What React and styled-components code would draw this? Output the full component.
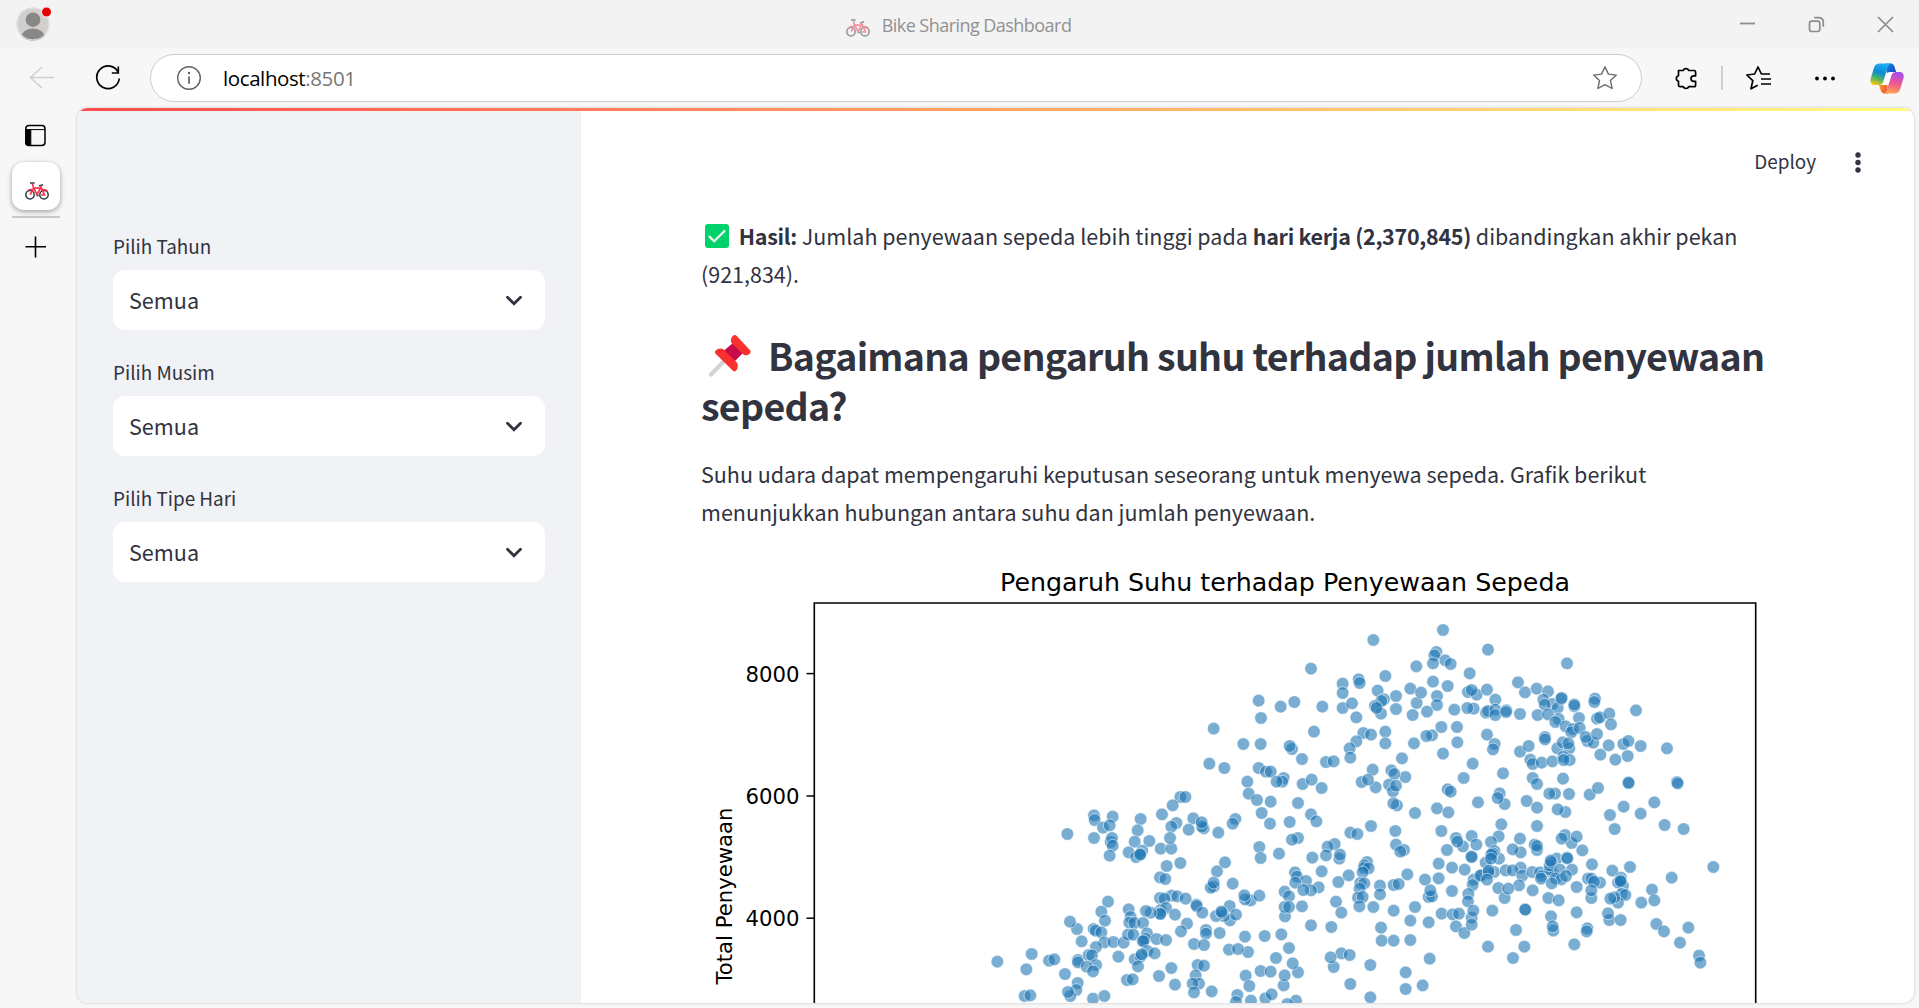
import React from 'react';
import styled, { createGlobalStyle, css } from 'styled-components';

const GlobalStyle = createGlobalStyle`
  * { box-sizing: border-box; }
  body { margin: 0; overflow: hidden; background: #f7f7f7; }
  svg { display: block; flex: none; }
`;

const uiFont = css`font-family: 'Open Sans', 'Noto Sans', sans-serif;`;
const appFont = css`font-family: 'Noto Sans CJK SC', 'Noto Sans', sans-serif;`;

const Window = styled.div`
  display: grid;
  grid-template-rows: 48px 60px 1fr;
  width: 1919px;
  height: 1008px;
  background: #f7f7f7;
`;

const TitleBar = styled.header`
  display: grid;
  grid-template-columns: 1fr auto 1fr;
  align-items: center;
  background: #f3f3f3;
`;
const Avatar = styled.div`padding-left: 15px;`;
const WindowTitle = styled.div`
  ${uiFont}
  display: flex;
  align-items: center;
  gap: 12px;
  padding: 2px 2px 0 0;
  font-size: 18px;
  line-height: 26px;
  letter-spacing: -0.54px;
  color: #919191;
  white-space: nowrap;
  svg { opacity: 0.5; margin-top: 5px; }
`;
const WindowButtons = styled.div`
  display: flex;
  justify-content: flex-end;
  gap: 52px;
  padding: 0 25px 0 0;
`;

const Toolbar = styled.nav`
  display: flex;
  align-items: center;
  padding: 0 15px 0 29px;
`;
const NavIcons = styled.div`
  display: flex;
  gap: 40px;
  width: 121px;
`;
const AddressBar = styled.div`
  ${uiFont}
  display: flex;
  align-items: center;
  width: 1492px;
  height: 48px;
  padding: 0 23px 0 25px;
  border: 1px solid #cdcdcd;
  border-radius: 24px;
  background: #fff;
`;
const Url = styled.div`
  flex: 1;
  padding-left: 21px;
  font-size: 20.5px;
  line-height: 28px;
  letter-spacing: -0.4px;
  color: #000;
  span { color: #767676; }
`;
const ToolIcons = styled.div`
  display: flex;
  flex: 1;
  align-items: center;
  padding-left: 32px;
`;
const Divider = styled.i`
  width: 1.5px;
  height: 24px;
  margin: 0 22px 0 23px;
  background: #cfcfcf;
`;
const MoreButton = styled.div`margin: 0 34.5px 0 42px;`;

const Body = styled.div`
  display: grid;
  grid-template-columns: 77px 1837px;
  min-height: 0;
`;
const TabRail = styled.aside`
  display: flex;
  flex-direction: column;
  align-items: center;
  width: 72px;
  padding-top: 16px;
`;
const ActiveTab = styled.div`
  display: grid;
  place-items: center;
  width: 48px;
  height: 48px;
  margin-top: 15px;
  padding: 10px 0 0 2px;
  border-radius: 12px;
  background: #fff;
  box-shadow: 0 1px 4px rgba(0, 0, 0, 0.28), 0 3px 6px rgba(0, 0, 0, 0.12);
`;
const RailRule = styled.i`
  width: 48px;
  height: 2px;
  margin: 6px 0 18px;
  background: #c9c9c9;
`;

const Page = styled.div`
  display: grid;
  grid-template-rows: 3px 1fr;
  height: 894.5px;
  overflow: hidden;
  border-radius: 11px;
  background: #fff;
  box-shadow: 0 0 3px rgba(0, 0, 0, 0.22);
`;
const Decoration = styled.div`background: linear-gradient(90deg, #ff4b4b, #fffd80);`;
const Columns = styled.div`
  display: grid;
  grid-template-columns: 504px 1333px;
  min-height: 0;
`;

const Sidebar = styled.aside`
  ${appFont}
  display: flex;
  flex-direction: column;
  gap: 25.5px;
  padding: 118.5px 36px 0;
  background: #f0f2f6;
  color: #31333f;
`;
const Field = styled.div`display: flex; flex-direction: column; gap: 9.5px;`;
const Label = styled.label`font-size: 18.9px; line-height: 31px;`;
const Select = styled.div`
  display: flex;
  align-items: center;
  justify-content: space-between;
  height: 60px;
  padding: 0 22px 2px 16px;
  border-radius: 12px;
  background: #fff;
  font-size: 21.6px;
  svg { margin-top: 3px; }
`;

const Main = styled.main`
  ${appFont}
  min-height: 0;
  overflow: hidden;
  padding: 0 50px 0 120px;
  color: #31333f;
  white-space: nowrap;
`;
const Header = styled.div`
  display: flex;
  justify-content: flex-end;
  height: 106.4px;
  padding: 35px 3px 0 0;
  font-size: 18.9px;
  line-height: 30px;
  gap: 39px;
  svg { margin-top: 6px; }
`;
const Paragraph = styled.p`
  margin: 0;
  font-size: 21.49px;
  line-height: 38px;
  b { font-weight: 700; letter-spacing: -0.28px; }
`;
const Heading = styled.h3`
  margin: 36.6px 0 24.6px;
  font-size: 37.5px;
  line-height: 50.4px;
  font-weight: 700;
  letter-spacing: -0.7px;
`;
const Emoji = styled.span`
  display: inline-block;
  width: ${p => p.$width}px;
  height: ${p => p.$height}px;
  margin: -8px 0 ${p => p.$drop}px ${p => p.$left}px;
  margin-right: ${p => p.$right}px;
  vertical-align: baseline;
`;
const Chart = styled.svg`
  margin: 18.6px 0 0 1px;
  text { font-family: 'DejaVu Sans', sans-serif; fill: #000; }
`;

const Bike = () => (
  <svg width="24" height="18" viewBox="0 0 24 18" fill="none">
    <g stroke="#2f3b45" strokeWidth="1.5">
      <circle cx="5" cy="12.7" r="4.2" />
      <circle cx="19" cy="12.7" r="4.2" />
      <path d="M5 1h4.6M14 4l4-1.2" strokeWidth="1.6" />
      <path d="M11.5 13.5h2.2" />
    </g>
    <path d="M7.4 2l1.2 4.2-3.4 6.5M8.4 5.5l3.7 7.3M8.6 6.1h6M12 12.6l4-7.6 3.4 7.8h-3" stroke="#f8354f" strokeWidth="1.7" />
    <path d="M3.4 8.2Q6 6.8 8.2 8.2M16 8Q20 6.5 22.8 9.5" stroke="#f8354f" strokeWidth="1.5" />
  </svg>
);

const ProfileIcon = () => (
  <svg width="36" height="36" viewBox="0 0 36 36">
    <defs><clipPath id="face"><circle cx="18" cy="18" r="16.5" /></clipPath></defs>
    <circle cx="18" cy="18" r="16.5" fill="#d2d0ce" />
    <g clipPath="url(#face)" fill="#8a8886">
      <circle cx="18" cy="13.7" r="7.3" />
      <path d="M6 31c1.5-5.800 6.500-8.500 12-8.500s10.500 2.700 12 8.500l-5 5H11z" />
    </g>
    <circle cx="18" cy="18" r="16" fill="none" stroke="#e3e2e1" />
    <circle cx="31.500" cy="6" r="5" fill="#e00000" stroke="#f3f3f3" strokeWidth="1" />
  </svg>
);

const Copilot = () => (
  <svg width="34" height="31" viewBox="0 0 34 31">
    <defs>
      <linearGradient id="cpA" x1="0.6" y1="0" x2="0.3" y2="1">
        <stop offset="0" stopColor="#1fb0f0" /><stop offset=".42" stopColor="#0f8bd8" />
        <stop offset=".72" stopColor="#52b560" /><stop offset="1" stopColor="#f4c80c" />
      </linearGradient>
      <linearGradient id="cpB" x1=".6" y1="0" x2=".4" y2="1">
        <stop offset="0" stopColor="#a54cf0" /><stop offset=".5" stopColor="#ec5596" />
        <stop offset="1" stopColor="#ffa650" />
      </linearGradient>
      <linearGradient id="cpC" x1="0" y1="0" x2="1" y2="1">
        <stop offset="0" stopColor="#1689e6" /><stop offset="1" stopColor="#1838b8" />
      </linearGradient>
      <linearGradient id="cpD" x1="0" y1="0" x2="1" y2="1">
        <stop offset="0" stopColor="#ffae2c" /><stop offset="1" stopColor="#ec4538" />
      </linearGradient>
    </defs>
    <path d="M16 .5h4.500c3.200 0 3.600 2.100 4.600 5.200l1 3.300h-5c-2.300 0-3.300 1.500-4 4z" fill="url(#cpC)" />
    <path d="M18 30.500h-3c-3.200 0-3.900-2-4.800-4.800L9 22h4.300c2.200 0 3.200-1 3.900-3.500z" fill="url(#cpD)" />
    <path d="M10 .5h11c-2 .6-3 2.700-3.700 5l-4 12.800C12.400 21.200 11.300 22 9 22H4.500C1 22-.3 19 .7 15.500L4 4.800C4.900 1.800 6.800.5 10 .5z" fill="url(#cpA)" />
    <path d="M24 30.500H13.500c2-.7 3-2.600 3.700-5l3.900-12.700c.9-2.900 2-3.800 4.300-3.800h4.200c3.500 0 4.800 3 3.800 6.500l-3.300 10.700c-.9 3-2.900 4.300-6.100 4.300z" fill="url(#cpB)" />
    <path d="M20.800 9.200h4.400c-2.300.2-3.300 1.500-4.100 4L19 20c-.5 1.600-1.200 2-2.500 2h-3.600l3.600-11c.4-1.300 1.400-1.900 4.300-1.800z" fill="#fff" />
  </svg>
);

const Check = () => (
  <svg width="24" height="24" viewBox="0 0 24 24">
    <rect width="24" height="24" rx="3" fill="#00d26a" />
    <path d="M4.500 12.600l4.700 4.600L19.500 7" fill="none" stroke="#f4f4f4" strokeWidth="2.300" strokeLinecap="round" strokeLinejoin="round" />
  </svg>
);

const Pin = () => (
  <svg width="42" height="42" viewBox="0 0 42 42">
    <path d="M2 39.500L17 24" stroke="#d3d3d3" strokeWidth="4" strokeLinecap="round" />
    <path d="M24 8l10 10-11 11-11-11z" fill="#ca0b4a" />
    <path d="M22.300 7.800c-1.200-3 .3-6 2.200-7.200 1.200-.8 2.300-.6 3.300.4l13 14c1 1 1.100 2.100.2 3.200-1.500 1.900-4.100 2.700-6.300 1.600z" fill="#f8312f" />
    <path d="M6.600 18.700c-1-1-.9-2.200.2-3.200 1.800-1.900 4.700-2.800 7.500-1.300l14 13.700c1 2.800.4 6-1.200 7.600-1.100 1.100-2.300 1.200-3.400.1z" fill="#f8312f" />
  </svg>
);

/* Scatter marks, grouped by region; each mark is measured in thirds of a pixel from its region's origin. */
const REGIONS = [
  { x: 980, y: 760, marks: [[601,111],[616,111],[578,136],[546,163],[640,175],[589,189],[574,200],[482,177],[473,211],[342,166],[344,180],[398,170],[369,203],[389,196],[342,234],[262,222],[392,246],[396,234],[398,257],[389,287],[464,245],[508,243],[446,277],[487,272],[468,291],[482,282],[480,284],[542,266],[574,266],[570,234],[560,318],[601,309],[540,352],[556,357],[626,209],[540,414],[575,407],[553,416],[592,409],[617,416],[649,434],[650,438],[542,450],[558,444],[540,460],[541,462],[585,464],[512,458],[498,453],[446,448],[452,471],[448,488],[463,489],[489,489],[384,425],[364,455],[375,482],[291,507],[270,485],[341,507],[347,512],[364,517],[305,544],[373,547],[348,561],[400,546],[431,548],[444,524],[460,524],[501,520],[496,536],[488,544],[490,543],[530,537],[558,540],[621,491],[603,514],[642,552],[155,582],[52,605],[139,628],[207,602],[223,598],[255,642],[294,600],[294,607],[326,585],[336,586],[348,615],[320,620],[339,634],[415,590],[464,598],[482,590],[502,573],[485,583],[474,619],[524,580],[537,648],[574,624],[585,674],[441,660],[458,658],[293,669],[289,690],[271,708],[264,696],[134,708],[151,706],[339,716],[373,708],[653,615],[647,646],[657,671],[638,671],[642,697]] },
  { x: 1180, y: 620, marks: [[101,326],[190,372],[242,372],[243,294],[236,242],[302,260],[343,246],[393,146],[427,260],[402,335],[336,387],[329,378],[366,417],[580,60],[488,191],[488,219],[536,178],[539,189],[616,168],[593,212],[612,238],[604,243],[488,264],[516,250],[529,292],[585,258],[603,281],[590,264],[648,228],[648,267],[691,206],[710,249],[698,285],[709,139],[550,339],[573,344],[529,364],[509,385],[511,413],[616,335],[616,370],[702,370],[666,415],[88,431],[133,444],[236,444],[258,455],[272,455],[202,485],[311,474],[307,485],[290,485],[206,521],[231,540],[272,545],[245,579],[368,492],[395,479],[438,426],[461,424],[425,504],[354,549],[578,449],[545,486],[587,502],[564,479],[634,451],[676,471],[643,462],[627,494],[639,514],[648,497],[651,556],[640,550],[705,579]] },
  { x: 1180, y: 800, marks: [[71,85],[66,80],[65,67],[115,98],[166,57],[158,71],[270,71],[329,66],[393,43],[409,64],[354,114],[336,119],[238,141],[242,174],[297,161],[135,187],[111,214],[158,251],[101,260],[92,263],[101,248],[212,301],[195,298],[193,286],[238,287],[149,318],[150,361],[132,348],[108,348],[126,339],[124,335],[168,344],[67,338],[78,390],[78,401],[119,399],[72,435],[195,410],[254,408],[304,403],[147,449],[204,456],[174,447],[72,497],[95,574],[242,513],[272,515],[197,527],[208,558],[172,585],[168,606],[213,602],[256,595],[275,583],[348,602],[322,612],[311,556],[314,526],[354,517],[338,490],[288,474],[327,444],[315,349],[345,217],[351,230],[378,243],[346,248],[416,262],[393,271],[370,270],[314,275],[327,289],[314,321],[327,321],[366,319],[425,214],[397,173],[464,132],[443,140],[438,166],[478,176],[480,164],[511,98],[532,102],[573,78],[646,93],[475,246],[506,226],[468,305],[484,338],[454,381],[393,376],[561,186],[553,196],[552,204],[566,205],[548,217],[541,249],[553,250],[539,266],[534,293],[548,291],[538,319],[580,321],[600,257],[600,283],[641,255],[656,252],[682,223],[648,134],[672,150],[661,155],[641,332],[705,321],[691,362],[691,420],[603,383],[605,422],[641,422],[571,495],[484,460],[461,501],[452,472],[509,465],[511,552],[571,592],[677,517],[677,567]] },
  { x: 1400, y: 600, marks: [[129,90],[264,149],[109,156],[103,166],[99,190],[136,181],[152,192],[209,220],[501,190],[99,245],[143,258],[63,278],[111,288],[111,315],[81,335],[163,329],[221,326],[202,324],[204,276],[230,284],[215,270],[261,269],[286,299],[258,338],[264,333],[286,329],[286,345],[319,331],[318,336],[360,342],[354,247],[375,277],[410,266],[444,274],[430,299],[458,312],[473,324],[434,314],[483,297],[485,294],[523,319],[523,314],[585,296],[583,306],[413,345],[444,343],[476,357],[466,366],[537,354],[497,379],[519,387],[514,397],[539,384],[562,423],[580,428],[557,411],[591,402],[591,356],[600,352],[628,341],[124,381],[171,381],[96,406],[79,408],[172,427],[261,404],[284,432],[279,448],[129,461],[218,491],[191,534],[143,568],[152,575],[309,520],[360,455],[386,438],[435,411],[435,418],[391,479],[398,492],[425,488],[457,484],[472,445],[488,427],[508,445],[505,430],[490,470],[509,480],[491,480],[601,464],[626,436],[489,536],[398,534],[411,552],[465,581],[448,581],[507,582],[569,584],[594,564],[380,603],[411,623],[496,636],[473,628],[299,580],[314,612],[293,594],[234,607],[111,625],[145,637]] },
  { x: 1400, y: 800, marks: [[124,93],[168,114],[189,139],[172,125],[215,108],[229,134],[304,73],[411,78],[141,150],[296,109],[273,126],[360,116],[214,169],[215,171],[116,191],[156,203],[194,209],[362,157],[338,148],[404,134],[411,150],[411,138],[297,176],[283,153],[278,160],[257,188],[274,164],[273,176],[515,129],[495,105],[485,116],[530,110],[547,151],[75,239],[116,235],[156,273],[86,291],[96,289],[91,271],[221,239],[218,255],[282,216],[245,225],[241,227],[266,219],[266,212],[261,239],[205,282],[204,304],[317,211],[362,203],[338,211],[367,227],[397,216],[420,217],[425,228],[423,236],[357,256],[295,264],[314,294],[325,266],[398,271],[277,332],[375,328],[376,329],[125,341],[158,343],[177,341],[168,379],[86,367],[193,399],[215,353],[220,332],[215,374],[348,390],[264,440],[373,440],[339,474],[89,476],[68,556],[470,176],[456,217],[450,208],[449,196],[454,187],[452,182],[501,173],[502,175],[480,209],[516,209],[467,235],[484,238],[498,228],[455,250],[530,261],[445,294],[476,301],[453,349],[460,392],[458,379],[530,337],[523,433],[562,385],[560,394],[576,193],[564,236],[600,248],[574,236],[582,245],[574,294],[574,271],[628,360],[624,340]] },
  { x: 1580, y: 640, marks: [[93,253],[168,211],[130,312],[145,303],[182,318],[261,325],[106,359],[143,348],[145,427],[146,429],[291,426],[293,430],[90,525],[131,500],[104,567],[182,521],[223,487],[254,555],[311,567],[400,681],[275,713],[97,692],[150,681],[123,713],[129,738],[114,727],[121,721],[122,724],[125,762],[136,765],[114,788],[103,772],[91,776],[216,749],[223,781],[184,788],[122,840],[229,852],[252,874],[325,863],[300,908],[357,947],[361,968]] },
];

const TICKS = [[8000, 673.6], [6000, 796], [4000, 918.2]];

const ScatterChart = () => (
  <Chart width="1080" height="460" viewBox="702 550 1080 460">
    <text x="1285" y="591" fontSize="25.300" textAnchor="middle">Pengaruh Suhu terhadap Penyewaan Sepeda</text>
    <text transform="translate(732.300 896) rotate(-90)" fontSize="21.200" textAnchor="middle">Total Penyewaan</text>
    {TICKS.map(([label, y]) => (
      <g key={label}>
        <path d={`M806.500 ${y}H814`} stroke="#000" strokeWidth="1.500" />
        <text x="799.500" y={y + 8} fontSize="21.200" textAnchor="end">{label}</text>
      </g>
    ))}
    <g fill="#1f77b4" fillOpacity="0.600" stroke="#fff" strokeOpacity="0.600" strokeWidth="0.900">
      {REGIONS.map(r => r.marks.map(([x, y], i) => (
        <circle key={`${r.x}-${r.y}-${i}`} cx={r.x + x / 3} cy={r.y + y / 3} r="6.300" />
      )))}
    </g>
    <path d="M814.300 1020V603H1755.700V1020" fill="none" stroke="#000" strokeWidth="1.600" />
  </Chart>
);

const FIELDS = ['Pilih Tahun', 'Pilih Musim', 'Pilih Tipe Hari'];

export default function App() {
  return (
    <Window>
      <GlobalStyle />
      <TitleBar>
        <Avatar><ProfileIcon /></Avatar>
        <WindowTitle><Bike />Bike Sharing Dashboard</WindowTitle>
        <WindowButtons>
          <svg width="17" height="17" viewBox="0 0 17 17"><path d="M1 7.500h15" stroke="#8c8c8c" strokeWidth="1.800" /></svg>
          <svg width="17" height="17" viewBox="0 0 17 17" fill="none" stroke="#8c8c8c" strokeWidth="1.700">
            <rect x="1.500" y="5.200" width="10.300" height="10.300" rx="2.200" />
            <path d="M6.200 1.700h4.300c3 0 4.800 1.900 4.800 4.700v4.400" />
          </svg>
          <svg width="17" height="17" viewBox="0 0 17 17"><path d="M1 1l15 15M16 1L1 16" stroke="#8c8c8c" strokeWidth="1.700" /></svg>
        </WindowButtons>
      </TitleBar>

      <Toolbar>
        <NavIcons>
          <svg width="26" height="26" viewBox="0 0 26 26" fill="none" stroke="#cfcfcf" strokeWidth="1.500"><path d="M25 12.500H1.500M13 2.200L1.500 12.500 13 23" /></svg>
          <svg width="26" height="26" viewBox="0 0 26 26" fill="none" stroke="#000" strokeWidth="1.700">
            <path d="M23.300 7.500A11.300 11.300 0 1 0 24.300 13.500" />
            <path d="M23.300 1.500v6.500h-6.500" />
          </svg>
        </NavIcons>
        <AddressBar>
          <svg width="26" height="26" viewBox="0 0 26 26" fill="none" stroke="#5f5f5f" strokeWidth="1.400">
            <circle cx="13" cy="13" r="11.300" /><path d="M13 11.500v7.300" strokeWidth="1.700" />
            <circle cx="13" cy="8" r="1.200" fill="#5f5f5f" stroke="none" />
          </svg>
          <Url>localhost<span>:8501</span></Url>
          <svg width="26" height="26" viewBox="0 0 26 26" fill="none" stroke="#6b6b6b" strokeWidth="1.400" strokeLinejoin="round">
            <path d="M13 1.800l3.400 7.300 8 1-5.900 5.500 1.600 7.900L13 19.700l-7.100 3.800 1.600-7.900-5.900-5.500 8-1z" />
          </svg>
        </AddressBar>
        <ToolIcons>
          <svg width="24" height="26" viewBox="0 0 24 26" fill="none" stroke="#000" strokeWidth="1.700" strokeLinejoin="round">
            <path d="M4.500 5.500h4.700a3 3 0 0 1 5.600 0H20q1.600 0 1.600 1.600v3.700h-1.800a2.800 2.800 0 1 0 0 5.600h1.800v3.500q0 1.700-1.600 1.700h-5.200a3 3 0 0 1-5.600 0H6.100q-1.600 0-1.600-1.700v-3.500a2.900 2.900 0 0 1 0-5.600z" />
          </svg>
          <Divider />
          <svg width="27" height="26" viewBox="0 0 27 26" fill="none" stroke="#000" strokeWidth="1.700" strokeLinejoin="round">
            <path d="M12.700 20.200L6 23.800l1.800-8.200L1.800 10l7.800-1L13 2l3.400 7H25M16 14h10M16 19h10" />
          </svg>
          <MoreButton>
            <svg width="22" height="26" viewBox="0 0 22 26"><circle cx="3" cy="13.500" r="1.900" /><circle cx="11" cy="13.500" r="1.900" /><circle cx="19" cy="13.500" r="1.900" /></svg>
          </MoreButton>
          <Copilot />
        </ToolIcons>
      </Toolbar>

      <Body>
        <TabRail>
          <svg width="23" height="23" viewBox="1 0 23 23">
            <rect x="1.800" y="1.500" width="19.200" height="20" rx="3.200" fill="none" stroke="#000" strokeWidth="1.500" />
            <path d="M1.800 5.600h19.200M1.800 6h5v15.500H4q-2.200 0-2.200-2.500z" stroke="#000" strokeWidth="1" />
          </svg>
          <ActiveTab><Bike /></ActiveTab>
          <RailRule />
          <svg width="22" height="22" viewBox="0 0 22 22"><path d="M.5 10.800h20.500M10.500 .5v21" stroke="#000" strokeWidth="1.600" /></svg>
        </TabRail>

        <Page>
          <Decoration />
          <Columns>
            <Sidebar>
              {FIELDS.map(name => (
                <Field key={name}>
                  <Label>{name}</Label>
                  <Select>
                    Semua
                    <svg width="18" height="12" viewBox="0 0 18 12" fill="none" stroke="#31333f" strokeWidth="2.800"><path d="M2.500 2.200l6.500 6.500 6.500-6.500" strokeLinecap="round" /></svg>
                  </Select>
                </Field>
              ))}
            </Sidebar>
            <Main>
              <Header>
                <span>Deploy</span>
                <svg width="6" height="22" viewBox="0 0 6 22" fill="#31333f"><circle cx="3" cy="3" r="2.700" /><circle cx="3" cy="10.500" r="2.700" /><circle cx="3" cy="18" r="2.700" /></svg>
              </Header>
              <Paragraph>
                <Emoji $width={24} $height={24} $drop={-3} $left={4} $right={9.8}><Check /></Emoji>
                <b>Hasil:</b> Jumlah penyewaan sepeda lebih tinggi pada <b>hari kerja (2,370,845)</b> dibandingkan akhir pekan<br />(921,834).
              </Paragraph>
              <Heading>
                <Emoji $width={42} $height={42} $drop={-6} $left={8} $right={17}><Pin /></Emoji>
                Bagaimana pengaruh suhu terhadap jumlah penyewaan<br />sepeda?
              </Heading>
              <Paragraph>
                Suhu udara dapat mempengaruhi keputusan seseorang untuk menyewa sepeda. Grafik berikut<br />menunjukkan hubungan antara suhu dan jumlah penyewaan.
              </Paragraph>
              <ScatterChart />
            </Main>
          </Columns>
        </Page>
      </Body>
    </Window>
  );
}
